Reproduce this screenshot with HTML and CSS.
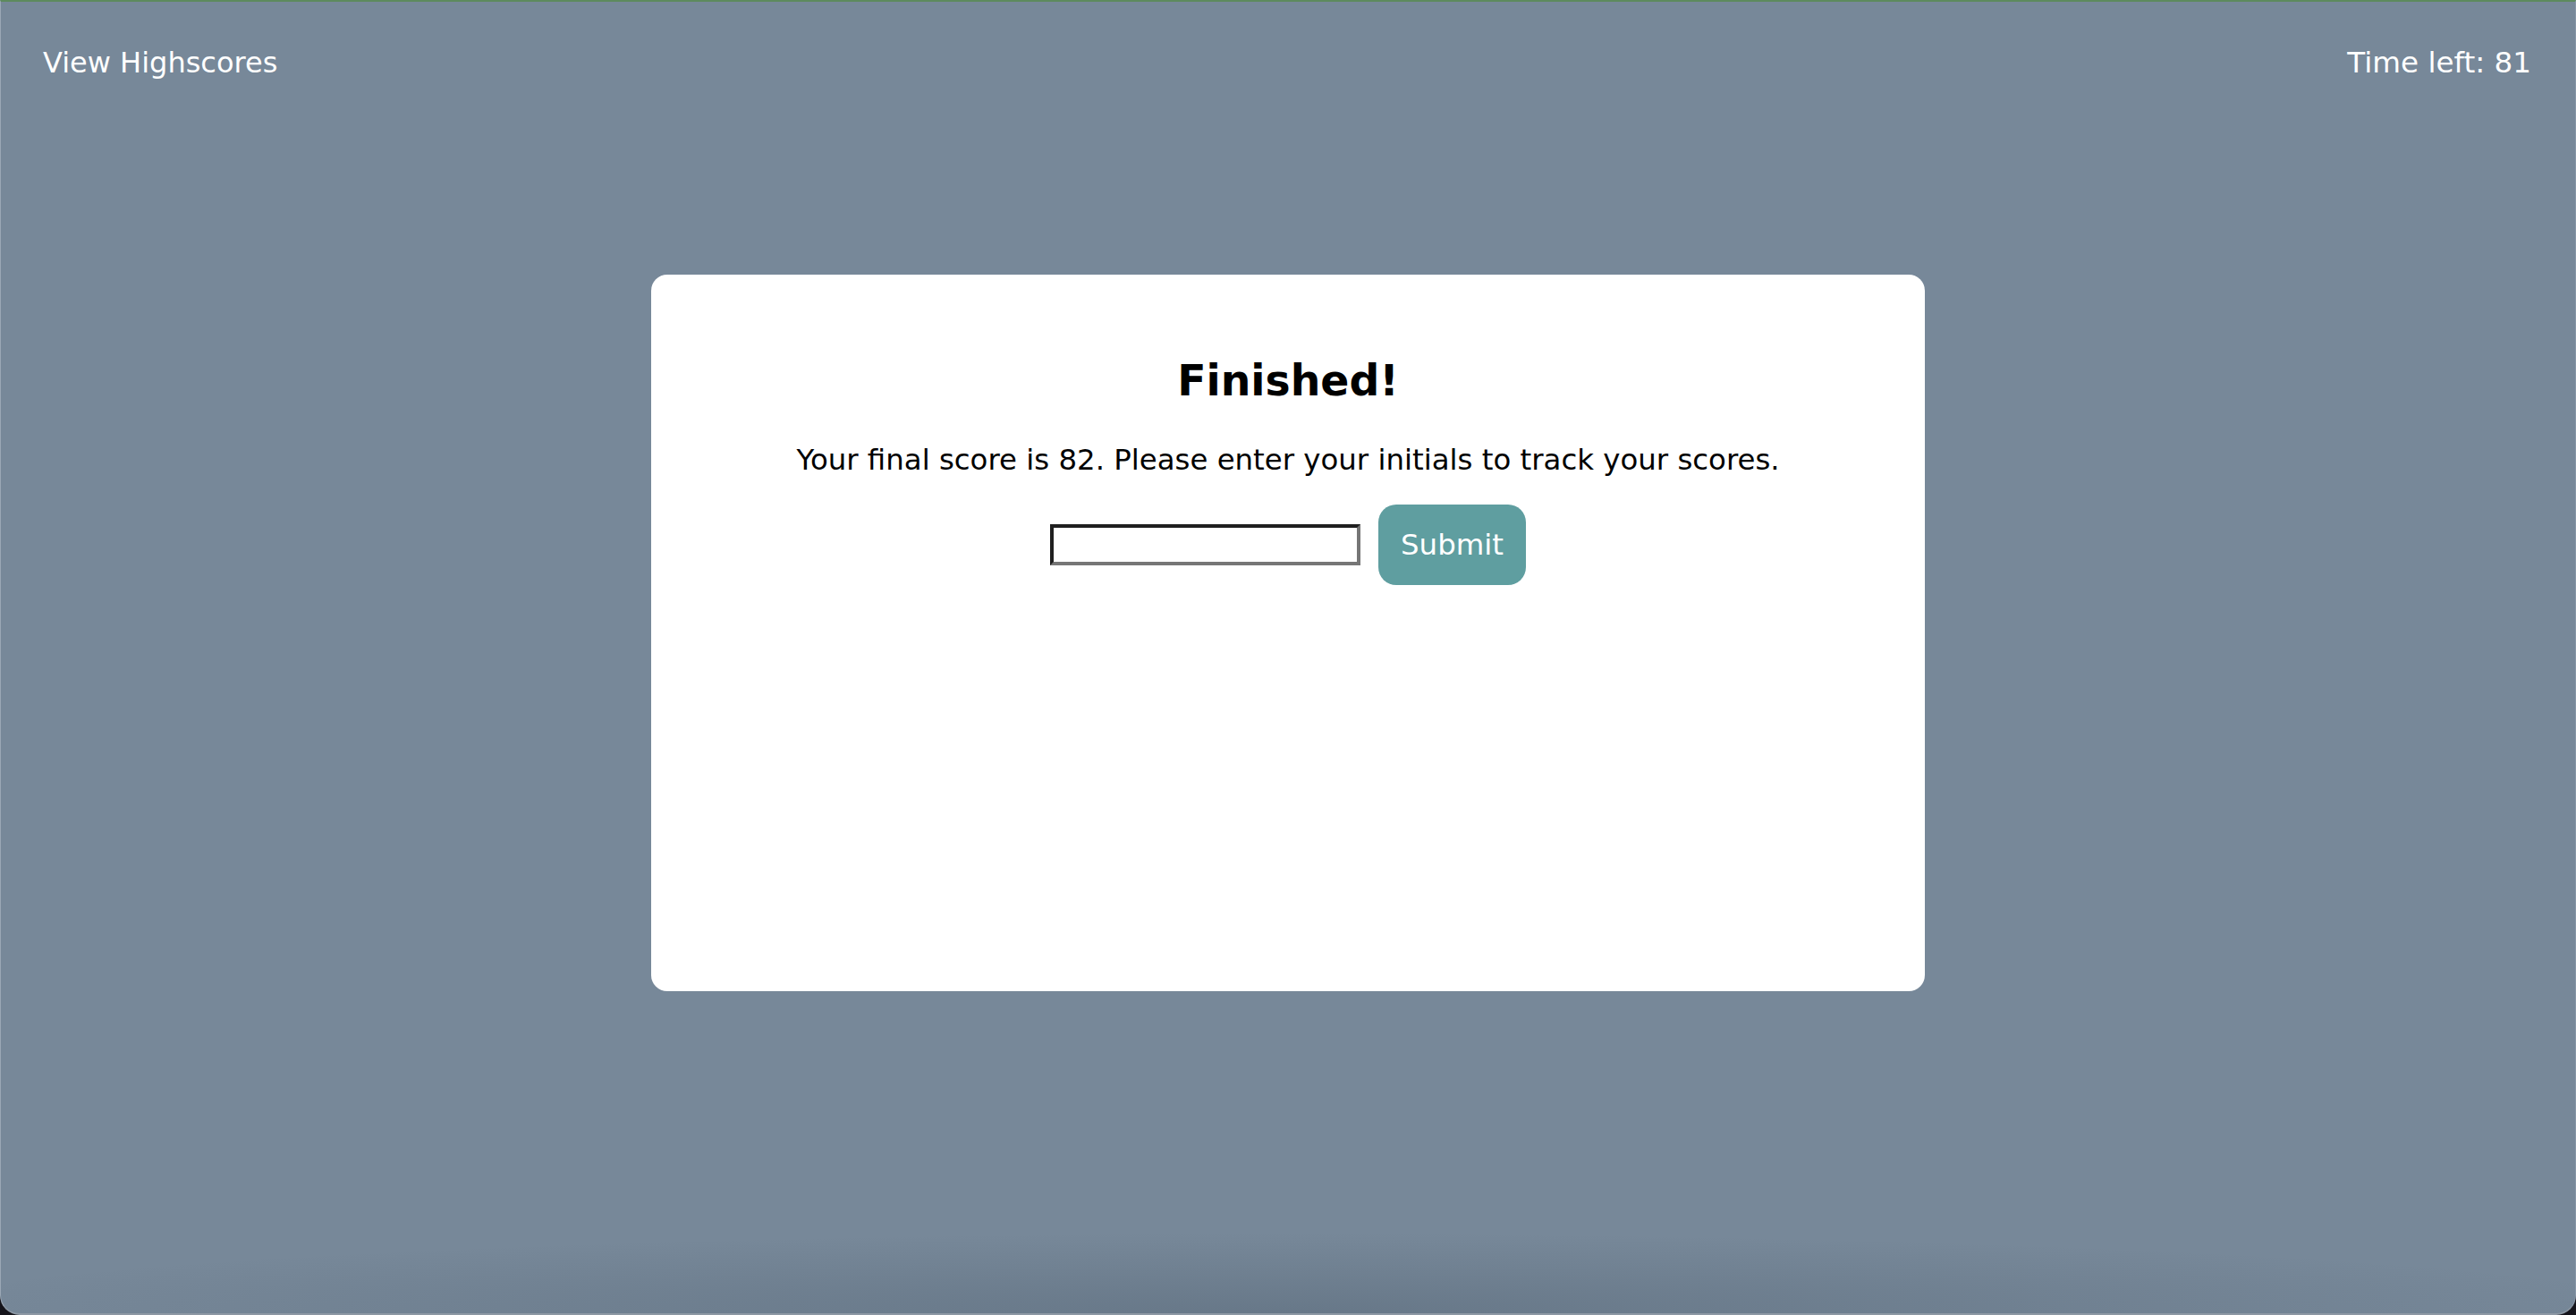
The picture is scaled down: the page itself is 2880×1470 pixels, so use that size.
FILE: index.html
```html
<!DOCTYPE html>
<html lang="en">
<head>
<meta charset="utf-8">
<title>Code Quiz</title>
<link rel="stylesheet" href="styles.css">
</head>
<body>
<div class="window">
  <header class="topbar">
    <a class="highscores" href="#">View Highscores</a>
    <div class="timer">Time left: 81</div>
  </header>
  <main class="card">
    <h2 class="title">Finished!</h2>
    <p class="message">Your final score is 82. Please enter your initials to track your scores.</p>
    <form class="entry">
      <input class="initials" type="text" aria-label="Initials">
      <button class="submit" type="button">Submit</button>
    </form>
  </main>
</div>
</body>
</html>
```
FILE: styles.css
```css
html, body {
  margin: 0;
  padding: 0;
  height: 100%;
}
body {
  background: #15141b;
  font-family: Verdana, "DejaVu Sans", sans-serif;
  overflow: hidden;
}
.window {
  position: relative;
  box-sizing: border-box;
  height: 1470px;
  background: #778899;
  border-top: 2px solid #5d8a5d;
  border-left: 1px solid #9aa7b5;
  border-right: 1px solid #8896a6;
  border-bottom: 2px solid #8d98a4;
  border-radius: 0 0 22px 22px;
  overflow: hidden;
}
.window::after {
  content: "";
  position: absolute;
  left: 0;
  right: 0;
  bottom: 0;
  height: 90px;
  background: radial-gradient(ellipse 55% 100% at 50% 100%, rgba(40, 55, 70, 0.2), rgba(40, 55, 70, 0.08) 60%, rgba(40, 55, 70, 0) 100%);
  pointer-events: none;
}
.topbar {
  display: flex;
  justify-content: space-between;
  align-items: center;
  padding: 48px 49px 0 47px;
  height: 40px;
  line-height: 40px;
  color: #ffffff;
}
.highscores {
  color: #ffffff;
  text-decoration: none;
  font-size: 32px;
}
.timer {
  color: #ffffff;
  font-size: 32.6px;
}
.card {
  box-sizing: border-box;
  width: 1424px;
  height: 801px;
  margin: 217px auto 0;
  padding-top: 91px;
  background: #ffffff;
  border-radius: 18px;
  text-align: center;
  color: #000000;
}
.title {
  margin: 0;
  font-size: 47.3px;
  line-height: 56px;
  font-weight: bold;
}
.message {
  margin: 40px 0 0;
  font-size: 32.4px;
  line-height: 40px;
}
.entry {
  display: flex;
  justify-content: center;
  align-items: center;
  gap: 20px;
  margin-top: 30px;
}
.initials {
  box-sizing: border-box;
  width: 347px;
  height: 46px;
  margin: 0;
  padding: 2px 6px;
  border-style: solid;
  border-width: 4px;
  border-color: #1f1f1f #767676 #767676 #1f1f1f;
  background: #ffffff;
  font-family: inherit;
  font-size: 26px;
  outline: none;
}
.submit {
  box-sizing: border-box;
  width: 165px;
  height: 90px;
  margin: 0;
  padding: 0;
  border: none;
  border-radius: 20px;
  background: #5f9ea0;
  color: #ffffff;
  font-family: inherit;
  font-size: 32.4px;
  cursor: pointer;
}
```
